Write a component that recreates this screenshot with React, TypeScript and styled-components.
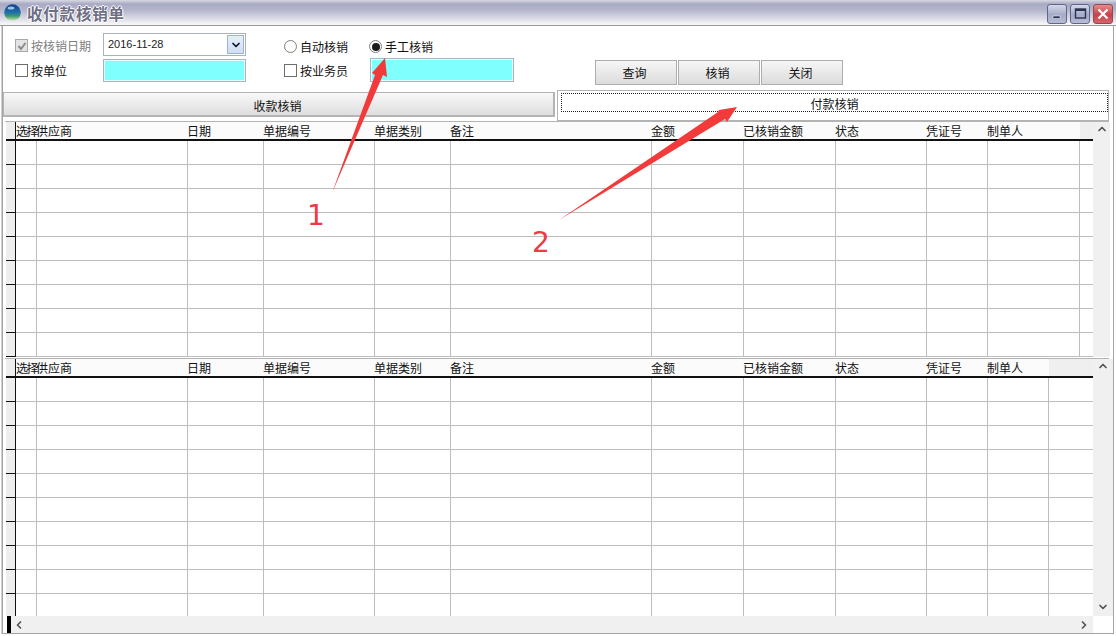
import React from 'react';
import styled, { createGlobalStyle } from 'styled-components';
import { ChevronDown, ChevronLeft, ChevronRight, ChevronUp } from 'lucide-react';

const GlobalStyle = createGlobalStyle`
  html, body {
    margin: 0;
    padding: 0;
    background: #fff;
  }
  body {
    font-family: "Noto Sans CJK SC", "Liberation Sans", sans-serif;
    font-size: 12px;
    color: #111;
  }
`;

const Window = styled.div`
  position: relative;
  width: 1116px;
  height: 636px;
  overflow: hidden;
  display: flex;
  flex-direction: column;
  background: #fff;
`;

const TitleBar = styled.div`
  height: 26px;
  flex: none;
  box-sizing: border-box;
  display: flex;
  align-items: center;
  padding: 0 3px 0 4px;
  background: linear-gradient(#d9d9e4 0, #a8a9c4 4px, #b4b5cc 10px, #e6e6ee 21px, #f6f6f8 24px);
  border-bottom: 1px solid #9a9a9a;
`;

const TitleText = styled.div`
  margin-left: 6px;
  font-size: 15.5px;
  font-weight: 700;
  letter-spacing: 0.8px;
  line-height: 18px;
  color: #6e6e84;
  text-shadow: 1px 0 0 #fff, -1px 0 0 #fff, 0 1px 0 #fff, 0 -1px 0 #fff;
`;

const TitleButtons = styled.div`
  margin-left: auto;
  display: flex;
  gap: 3px;
  margin-top: 2px;
`;

const CaptionButton = styled.div<{ $close?: boolean }>`
  width: 20px;
  height: 20px;
  box-sizing: border-box;
  border-radius: 3px;
  border: 1px solid ${(p) => (p.$close ? '#8f4a52' : '#5f6686')};
  background: ${(p) =>
    p.$close
      ? 'linear-gradient(#e88a8a, #c8434b 55%, #d8636a)'
      : 'linear-gradient(#d4d8e8, #a4abc8 55%, #b8bdd4)'};
  display: flex;
  align-items: center;
  justify-content: center;
`;

const Client = styled.div`
  flex: 1;
  min-height: 0;
  display: flex;
  flex-direction: column;
  margin: 0 2px 2px 2px;
  border: 1px solid #a4a4a4;
  border-top: none;
  box-shadow: -1px 0 0 #d0d0d0;
`;

const FilterForm = styled.div`
  height: 64px;
  flex: none;
  box-sizing: border-box;
  padding: 7px 0 0 12px;
  display: grid;
  grid-template-columns: 88px 143px 123px 145px auto;
  grid-template-rows: 25px 25px;
`;

const OptionLabel = styled.label<{ $disabled?: boolean; $wide?: boolean; $low?: boolean }>`
  display: flex;
  align-items: center;
  gap: 3px;
  line-height: 14px;
  white-space: nowrap;
  color: ${(p) => (p.$disabled ? '#808080' : '#111')};
  margin-left: ${(p) => (p.$wide ? '38px' : '0')};
  padding-top: ${(p) => (p.$low ? '2px' : '0')};
`;

const CheckBox = styled.span<{ $disabled?: boolean }>`
  width: 13px;
  height: 13px;
  box-sizing: border-box;
  flex: none;
  border: 1px solid ${(p) => (p.$disabled ? '#a8a8a8' : '#6e6e6e')};
  background: ${(p) => (p.$disabled ? '#e4e4e4' : '#fff')};
  display: flex;
  align-items: center;
  justify-content: center;
`;

const Radio = styled.span<{ $checked?: boolean }>`
  width: 13px;
  height: 13px;
  box-sizing: border-box;
  flex: none;
  border-radius: 50%;
  border: 1px solid #7e7e7e;
  background: #fff;
  display: flex;
  align-items: center;
  justify-content: center;

  &::after {
    content: '';
    display: ${(p) => (p.$checked ? 'block' : 'none')};
    width: 8px;
    height: 8px;
    border-radius: 50%;
    background: #1c1c1c;
  }
`;

const DateBox = styled.div`
  height: 23px;
  box-sizing: border-box;
  align-self: start;
  display: flex;
  align-items: center;
  justify-content: space-between;
  padding: 0 1px 0 4px;
  border: 1px solid #a7b3c4;
  font-family: "Liberation Sans", sans-serif;
  font-size: 11px;
  color: #222;
`;

const DateText = styled.span`
  margin-bottom: 2px;
`;

const DropButton = styled.div`
  width: 17px;
  height: 19px;
  box-sizing: border-box;
  border: 1px solid #9db3d3;
  background: linear-gradient(#e6eefa, #d0def2);
  display: flex;
  align-items: center;
  justify-content: center;
  color: #10182c;
`;

const CyanInput = styled.div<{ $wide?: boolean }>`
  height: ${(p) => (p.$wide ? '24px' : '23px')};
  box-sizing: border-box;
  align-self: start;
  border: 1px solid #a7b3c4;
  box-shadow: inset 0 0 0 1px #e4ffff;
  background: #80ffff;
  margin-left: ${(p) => (p.$wide ? '1px' : '0')};
  margin-top: ${(p) => (p.$wide ? '0' : '1px')};
`;

const ActionButtons = styled.div`
  grid-column: 5;
  grid-row: 2;
  margin-left: 81px;
  display: flex;
  gap: 1px;
  margin-top: 2px;
`;

const ActionButton = styled.div`
  width: 82px;
  height: 25px;
  box-sizing: border-box;
  border: 1px solid #adadad;
  padding-right: 3px;
  background: linear-gradient(#f6f6f6, #dcdcdc);
  display: flex;
  align-items: center;
  justify-content: center;
  color: #111;
`;

const TabStrip = styled.div`
  height: 31px;
  flex: none;
  display: flex;
  align-items: flex-start;
  gap: 2px;
`;

const TabButton = styled.div<{ $active?: boolean }>`
  width: 552px;
  flex: none;
  box-sizing: border-box;
  display: flex;
  align-items: center;
  justify-content: center;
  color: #111;
  height: ${(p) => (p.$active ? '31px' : '25px')};
  margin-top: ${(p) => (p.$active ? '0' : '2px')};
  padding: ${(p) => (p.$active ? '0' : '2px 2px 0 0')};
  background: ${(p) => (p.$active ? '#fff' : 'linear-gradient(#f8f8f8, #dedede)')};
  border: 1px solid #b4b4b4;
  border-right-width: ${(p) => (p.$active ? '1px' : '2px')};
  border-bottom-width: ${(p) => (p.$active ? '1px' : '2px')};
`;

const FocusRect = styled.div`
  width: calc(100% - 3px);
  height: 19px;
  margin: -6px 0 0 3px;
  padding: 1px 0 0 0;
  box-sizing: border-box;
  border: 1px dotted #222;
  display: flex;
  align-items: center;
  justify-content: center;
`;

const GridPanel = styled.div<{ $height: number }>`
  height: ${(p) => p.$height}px;
  flex: none;
  display: flex;
  margin-left: 3px;
  overflow: hidden;
`;

const GridBody = styled.div`
  width: 1087px;
  flex: none;
  overflow: hidden;
`;

const HeaderRow = styled.div<{ $columns: string }>`
  display: grid;
  grid-template-columns: ${(p) => p.$columns};
  height: 19px;
  box-sizing: border-box;
  border-bottom: 2px solid #111;
  background: #fbfbfb;
`;

const HeaderCell = styled.div<{ $tight?: boolean }>`
  line-height: 17px;
  margin-left: ${(p) => (p.$tight ? '0' : '-1px')};
  white-space: nowrap;
  overflow: visible;
  color: #111;
  letter-spacing: ${(p) => (p.$tight ? '-1.5px' : '0')};
`;

const RowHeaderCell = styled.div`
  background: #eeeeee;
  border-right: 1px solid #111;
`;

const FillerCell = styled.div`
  background: #efefef;
`;

const DataRow = styled.div<{ $columns: string }>`
  display: grid;
  grid-template-columns: ${(p) => p.$columns};
  height: 24px;
`;

const DataCell = styled.div`
  border-right: 1px solid #bdbdbd;
  border-bottom: 1px solid #bdbdbd;
`;

const DataRowHeader = styled.div`
  background: #eeeeee;
  border-right: 1px solid #111;
  border-bottom: 1px solid #111;
`;

const DataFiller = styled.div`
  border-bottom: 1px solid #bdbdbd;
`;

const VScrollBar = styled.div<{ $width: number }>`
  width: ${(p) => p.$width}px;
  flex: none;
  background: #f0f0f0;
  display: flex;
  flex-direction: column;
  align-items: center;
  justify-content: space-between;
  padding: 1px 0 0;
  color: #555;
`;

const ScrollFoot = styled.div`
  height: 18px;
  display: flex;
  align-items: center;
`;

const HScrollBar = styled.div`
  height: 17px;
  flex: none;
  box-sizing: border-box;
  display: flex;
  align-items: center;
  margin: 0 0 0 4px;
  padding-right: 3px;
  width: 1086px;
  background: #f0f0f0;
  color: #555;
`;

const ScrollThumb = styled.div`
  width: 4px;
  height: 100%;
  background: #000;
  margin-right: 2px;
`;

const ScrollSpacer = styled.div`
  flex: 1;
`;

const GridSeparator = styled.div<{ $gap?: number }>`
  height: 1px;
  flex: none;
  margin: ${(p) => p.$gap ?? 0}px 4px 0 2px;
  background: #b4b4b4;
`;

const Annotations = styled.svg`
  position: absolute;
  left: 0;
  top: 0;
  pointer-events: none;
`;

const StepNumber = styled.div<{ $left: number; $top: number }>`
  position: absolute;
  left: ${(p) => p.$left}px;
  top: ${(p) => p.$top}px;
  font-family: "DejaVu Sans", sans-serif;
  font-size: 28px;
  line-height: 30px;
  color: #ee3a42;
`;

const columns = [
  { title: '选择', width: 21 },
  { title: '供应商', width: 151 },
  { title: '日期', width: 76 },
  { title: '单据编号', width: 111 },
  { title: '单据类别', width: 76 },
  { title: '备注', width: 201 },
  { title: '金额', width: 92 },
  { title: '已核销金额', width: 92 },
  { title: '状态', width: 91 },
  { title: '凭证号', width: 61 },
];

const DataGrid = ({
  lastWidth,
  rows,
  height,
  barWidth,
}: {
  lastWidth: number;
  rows: number;
  height: number;
  barWidth: number;
}) => {
  const template = `10px ${columns.map((c) => `${c.width}px`).join(' ')} ${lastWidth}px 1fr`;
  return (
    <GridPanel $height={height}>
      <GridBody>
        <HeaderRow $columns={template}>
          <RowHeaderCell />
          {columns.map((c, i) => (
            <HeaderCell key={c.title} $tight={i === 0}>
              {c.title}
            </HeaderCell>
          ))}
          <HeaderCell>制单人</HeaderCell>
          <FillerCell />
        </HeaderRow>
        {Array.from({ length: rows }).map((_, r) => (
          <DataRow key={r} $columns={template}>
            <DataRowHeader />
            {columns.map((c) => (
              <DataCell key={c.title} />
            ))}
            <DataCell />
            <DataFiller />
          </DataRow>
        ))}
      </GridBody>
      <VScrollBar $width={barWidth}>
        <ChevronUp size={12} strokeWidth={3.5} />
        {rows > 9 && (
          <ScrollFoot>
            <ChevronDown size={12} strokeWidth={3.5} />
          </ScrollFoot>
        )}
      </VScrollBar>
    </GridPanel>
  );
};

const Globe = () => (
  <svg width="17" height="17" viewBox="0 0 17 17">
    <defs>
      <linearGradient id="globe" x1="0" y1="0" x2="0" y2="1">
        <stop offset="0" stopColor="#123f86" />
        <stop offset="0.5" stopColor="#1f6fae" />
        <stop offset="0.72" stopColor="#3f9a6a" />
        <stop offset="1" stopColor="#cfe8b8" />
      </linearGradient>
    </defs>
    <circle cx="8.5" cy="8.5" r="8.3" fill="url(#globe)" />
    <ellipse cx="7" cy="4" rx="3.4" ry="1.6" fill="#b8d4ee" opacity="0.85" />
  </svg>
);

const CheckMark = () => (
  <svg width="10" height="10" viewBox="0 0 10 10">
    <path d="M1.5 5 L4 8 L8.5 2" fill="none" stroke="#8a8a8a" strokeWidth="2" />
  </svg>
);

export default function App() {
  return (
    <Window>
      <GlobalStyle />
      <TitleBar>
        <Globe />
        <TitleText>收付款核销单</TitleText>
        <TitleButtons>
          <CaptionButton>
            <svg width="12" height="12" viewBox="0 0 12 12">
              <rect x="2" y="8" width="7" height="2.5" fill="#2b3350" stroke="#fff" strokeWidth="0.5" />
            </svg>
          </CaptionButton>
          <CaptionButton>
            <svg width="13" height="13" viewBox="0 0 13 13">
              <rect x="1.5" y="2" width="10" height="9" fill="none" stroke="#2b3350" strokeWidth="1.4" />
              <rect x="1.5" y="2" width="10" height="2" fill="#2b3350" />
            </svg>
          </CaptionButton>
          <CaptionButton $close>
            <svg width="14" height="14" viewBox="0 0 14 14">
              <path d="M2.5 2.5 L11.5 11.5 M11.5 2.5 L2.5 11.5" stroke="#fff" strokeWidth="2.2" />
            </svg>
          </CaptionButton>
        </TitleButtons>
      </TitleBar>
      <Client>
        <FilterForm>
          <OptionLabel $disabled>
            <CheckBox $disabled>
              <CheckMark />
            </CheckBox>
            按核销日期
          </OptionLabel>
          <DateBox>
            <DateText>2016-11-28</DateText>
            <DropButton>
              <ChevronDown size={12} strokeWidth={3.5} />
            </DropButton>
          </DateBox>
          <OptionLabel $wide $low>
            <Radio />
            自动核销
          </OptionLabel>
          <OptionLabel $low>
            <Radio $checked />
            手工核销
          </OptionLabel>
          <div />
          <OptionLabel>
            <CheckBox />
            按单位
          </OptionLabel>
          <CyanInput />
          <OptionLabel $wide>
            <CheckBox />
            按业务员
          </OptionLabel>
          <CyanInput $wide />
          <ActionButtons>
            <ActionButton>查询</ActionButton>
            <ActionButton>核销</ActionButton>
            <ActionButton>关闭</ActionButton>
          </ActionButtons>
        </FilterForm>
        <TabStrip>
          <TabButton>收款核销</TabButton>
          <TabButton $active>
            <FocusRect>付款核销</FocusRect>
          </TabButton>
        </TabStrip>
        <GridSeparator />
        <DataGrid lastWidth={92} rows={9} height={235} barWidth={17} />
        <GridSeparator $gap={1} />
        <DataGrid lastWidth={61} rows={10} height={257} barWidth={20} />
        <HScrollBar>
          <ScrollThumb />
          <ChevronLeft size={12} strokeWidth={3.5} />
          <ScrollSpacer />
          <ChevronRight size={12} strokeWidth={3.5} />
        </HScrollBar>
      </Client>
      <Annotations width="1116" height="636" viewBox="0 0 1116 636">
        <polygon points="332,193 375,75 372,73 385,58 387,77 383,75" fill="#f23a3a" />
        <polygon points="559,220 718,112 719,110 737,107 727,122 725,119" fill="#f23a3a" />
      </Annotations>
      <StepNumber $left={307} $top={201}>1</StepNumber>
      <StepNumber $left={532} $top={228}>2</StepNumber>
    </Window>
  );
}
